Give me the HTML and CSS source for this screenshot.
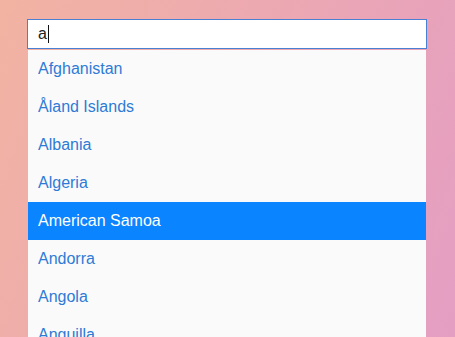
FILE: index.html
```html
<!DOCTYPE html>
<html>
<head>
<meta charset="utf-8">
<link rel="stylesheet" href="styles.css">
</head>
<body>
<div class="combo">
  <div class="input"><span class="value">a</span><span class="caret"></span></div>
  <ul class="list">
    <li class="item">Afghanistan</li>
    <li class="item">Åland Islands</li>
    <li class="item">Albania</li>
    <li class="item">Algeria</li>
    <li class="item active">American Samoa</li>
    <li class="item">Andorra</li>
    <li class="item">Angola</li>
    <li class="item">Anguilla</li>
    <li class="item">Antarctica</li>
  </ul>
</div>
</body>
</html>
```
FILE: styles.css
```css
html, body {
  margin: 0;
  padding: 0;
  height: 100%;
  overflow: hidden;
}
body {
  background: linear-gradient(110deg, #f2b3a2 0%, #eca8b2 50%, #e49ec3 100%);
  font-family: "Liberation Sans", Arial, sans-serif;
  font-size: 16px;
}
.combo {
  width: 400px;
  margin: 19px 0 0 27px;
}
.input {
  box-sizing: border-box;
  height: 30px;
  background: #fff;
  border: 1px solid #4a7fd2;
  display: flex;
  align-items: center;
  padding-left: 10px;
  color: #222;
}
.value {
  line-height: 18px;
}
.caret {
  display: inline-block;
  width: 1px;
  height: 18px;
  background: #111;
  margin-left: 1px;
}
.list {
  list-style: none;
  margin: 1px 1px 0 1px;
  padding: 0;
  background: #fafafa;
}
.item {
  height: 38px;
  line-height: 38px;
  padding-left: 10px;
  color: #2e7bd6;
}
.item.active {
  background: #0a84ff;
  color: #fff;
}
```
